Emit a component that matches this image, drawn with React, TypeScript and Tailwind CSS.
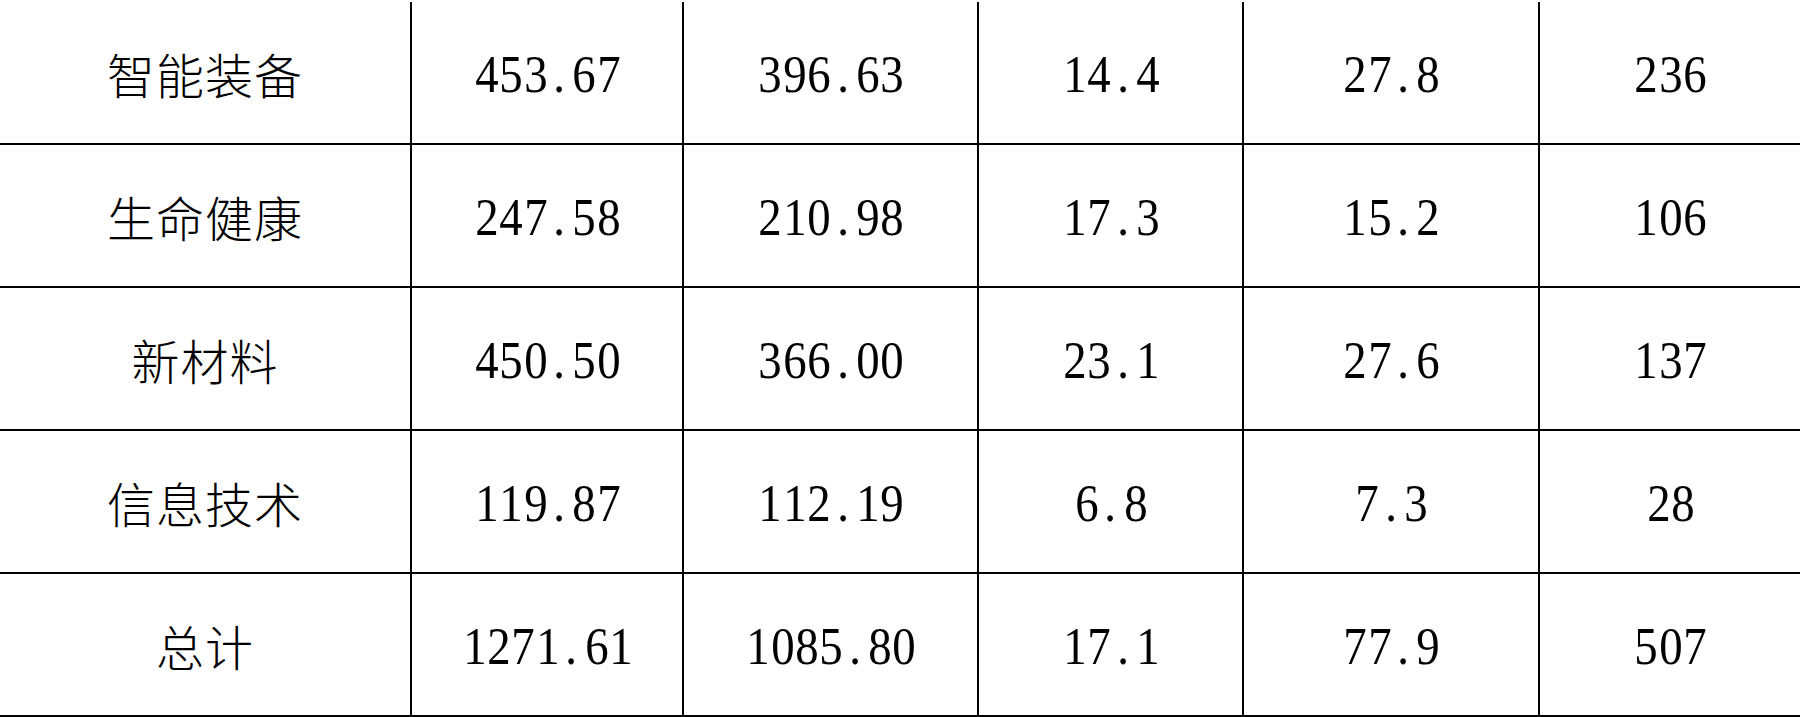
import React from "react";

const rows: string[][] = [
  ["智能装备", "453.67", "396.63", "14.4", "27.8", "236"],
  ["生命健康", "247.58", "210.98", "17.3", "15.2", "106"],
  ["新材料", "450.50", "366.00", "23.1", "27.6", "137"],
  ["信息技术", "119.87", "112.19", "6.8", "7.3", "28"],
  ["总计", "1271.61", "1085.80", "17.1", "77.9", "507"],
];

function Num({ v }: { v: string }) {
  return (
    <div className="flex pt-[4px] text-[52px] leading-none [font-family:'Liberation_Serif',serif]">
      {v.split("").map((ch, k) => (
        <span key={k} className="inline-block w-[24.4px] text-center scale-x-[0.9]">
          {ch}
        </span>
      ))}
    </div>
  );
}

export default function App() {
  return (
    <div className="w-[1805px] h-[717px] bg-white overflow-hidden">
      <div className="mt-[2px] w-[1800px] grid grid-cols-[412px_272px_295px_265px_296px_260px]">
        {rows.map((r, i) =>
          r.map((c, j) => (
            <div
              key={`${i}-${j}`}
              className={
                "h-[143px] border-b-2 border-black flex items-center justify-center text-black " +
                (j < 5 ? "border-r-2" : "")
              }
            >
              {j === 0 ? (
                <span className="text-[48px] font-light tracking-[1px] [font-family:'Noto_Sans_CJK_SC',sans-serif]">
                  {c}
                </span>
              ) : (
                <Num v={c} />
              )}
            </div>
          ))
        )}
      </div>
    </div>
  );
}
